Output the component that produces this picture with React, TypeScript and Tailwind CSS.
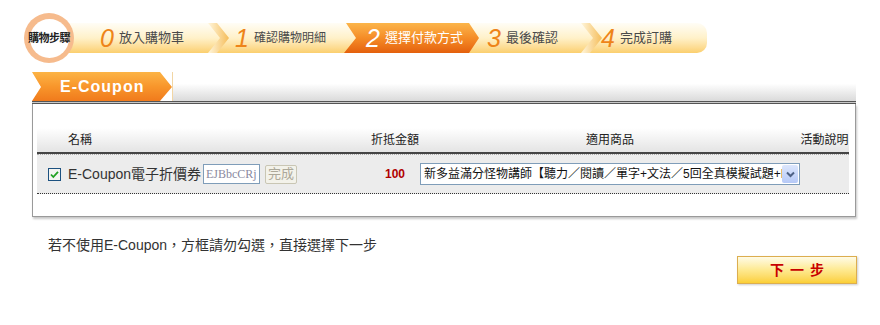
const FONT = "font-['Liberation_Sans','Noto_Sans_CJK_TC',sans-serif]"

function Chevron() {
  return (
    <svg width="24" height="30" viewBox="0 0 24 30" className="shrink-0">
      <defs>
        <linearGradient id="chev" x1="0" y1="0" x2="1" y2="0">
          <stop offset="0" stopColor="#fff6dc" />
          <stop offset="1" stopColor="#f5bd5a" />
        </linearGradient>
      </defs>
      <polygon points="2,0 11,0 23,15 11,30 2,30 14,15" fill="url(#chev)" />
    </svg>
  )
}

function StepNum({ n, active }: { n: string; active?: boolean }) {
  return (
    <span
      className={`font-['Liberation_Sans',sans-serif] italic text-[25px] leading-none mr-[5px] ${
        active ? 'text-white' : 'text-[#ee8419]'
      }`}
    >
      {n}
    </span>
  )
}

function StepBar() {
  return (
    <div className="flex items-center h-[50px] ml-[24px]">
      <div className="relative z-10 flex h-[50px] w-[50px] shrink-0 items-center justify-center rounded-full bg-[#f6bb8d]">
        <div className="flex h-[39px] w-[39px] items-center justify-center rounded-full bg-white">
          <span className="whitespace-nowrap text-[11px] font-bold tracking-[-0.5px] text-[#222]">購物步驟</span>
        </div>
      </div>
      <div className="-ml-[14px] flex h-[30px] w-[647px] items-center rounded-r-[10px] bg-linear-to-b from-[#fffdf6] via-[#fff1c9] to-[#fbcf6e] text-[13px] text-[#4a4a4a]">
        <div className="flex w-[146px] items-center pl-[40px]">
          <StepNum n="0" />
          <span>放入購物車</span>
        </div>
        <Chevron />
        <div className="flex w-[117px] items-center pl-[5px]">
          <StepNum n="1" />
          <span className="text-[12px]">確認購物明細</span>
        </div>
        <div className="-ml-[3px] flex h-[30px] w-[135px] shrink-0 items-center bg-linear-to-b from-[#fbb54a] via-[#f58c26] to-[#e4600c] pl-[22px] text-[13px] text-white [clip-path:polygon(2px_0,125px_0,135px_15px,125px_30px,0_30px,12px_15px)]">
          <StepNum n="2" active />
          <span>選擇付款方式</span>
        </div>
        <div className="flex w-[100px] items-center pl-[8px]">
          <StepNum n="3" />
          <span>最後確認</span>
        </div>
        <Chevron />
        <div className="-ml-[2px] flex items-center">
          <StepNum n="4" />
          <span>完成訂購</span>
        </div>
      </div>
    </div>
  )
}

function Checkbox() {
  return (
    <svg width="13" height="13" viewBox="0 0 13 13" className="shrink-0">
      <rect x="0.5" y="0.5" width="12" height="12" fill="#f4f4f0" stroke="#1c5180" />
      <path d="M3 6.5 L5.3 9 L10 3.8" fill="none" stroke="#21a121" strokeWidth="1.8" />
    </svg>
  )
}

function CouponBox() {
  return (
    <div className="ml-[32px] mt-[9px] w-[824px]">
      <div className="flex h-[29px]">
        <div className="flex w-[140px] shrink-0 items-center bg-linear-to-b from-[#fcb446] via-[#f8962b] to-[#f07a1c] pl-[28px] [clip-path:polygon(0_0,128px_0,140px_15px,128px_29px,0_29px,9px_15px)]">
          <span className={`${FONT} text-[16px] font-bold tracking-[1px] text-white`}>E-Coupon</span>
        </div>
        <div className="w-px bg-[#f2d6a4]" />
        <div className="flex-1 bg-linear-to-b from-white from-40% to-[#dadada]" />
      </div>
      <div className="h-[3px] border-y border-[#555] bg-[#c8c8c8]" />
      <div className="border-x border-b border-[#9a9a9a] pt-[24px] shadow-[1px_2px_2px_rgba(0,0,0,0.22)]">
        <div className="ml-[4px] mr-[6px]">
          <div className="grid h-[26px] grid-cols-[333px_50px_380px_49px] items-end border-b-2 border-[#444] bg-linear-to-b from-white to-[#e4e4e4] pb-[3px] text-[12px] text-[#222]">
            <div className="pl-[31px]">名稱</div>
            <div className="text-center whitespace-nowrap">折抵金額</div>
            <div className="text-center">適用商品</div>
            <div className="text-center whitespace-nowrap">活動說明</div>
          </div>
          <div className="grid h-[40px] grid-cols-[333px_50px_380px_49px] items-center border-y border-dotted border-t-[#aaa] border-b-[#333] bg-[#ececec] text-[12px] text-[#333]">
            <div className="flex items-center pl-[11px]">
              <Checkbox />
              <span className="ml-[7px] w-[135px] shrink-0 whitespace-nowrap text-[14px]">E-Coupon電子折價券</span>
              <div className="flex h-[20px] w-[57px] shrink-0 items-center border border-[#7f9db9] bg-white pl-[2px] font-['Liberation_Serif',serif] text-[12px] text-[#8a8aa0]">
                EJBbcCRj
              </div>
              <div className="ml-[5px] flex h-[19px] w-[32px] items-center justify-center rounded-[2px] border border-[#c9c6b4] bg-[#f3f2ea] text-[13px] text-[#aca899]">
                完成
              </div>
            </div>
            <div className="text-center text-[12px] font-bold text-[#b00000]">100</div>
            <div className="flex h-[22px] items-center border border-[#7f9db9] bg-white">
              <div className="flex-1 overflow-hidden whitespace-nowrap pl-[3px] text-[12px] text-[#111]">
                新多益滿分怪物講師【聽力／閱讀／單字+文法／5回全真模擬試題+MP3】
              </div>
              <div className="mr-px flex h-[18px] w-[16px] shrink-0 items-center justify-center rounded-[2px] bg-linear-to-b from-[#dce6fc] to-[#b6c9f7]">
                <svg width="9" height="7" viewBox="0 0 9 7">
                  <path d="M1 1.5 L4.5 5 L8 1.5" fill="none" stroke="#4d6185" strokeWidth="2" />
                </svg>
              </div>
            </div>
            <div />
          </div>
        </div>
        <div className="h-[22px]" />
      </div>
    </div>
  )
}

export default function App() {
  return (
    <div className={`${FONT} relative h-[325px] w-[880px] overflow-hidden bg-white pt-[13px]`}>
      <StepBar />
      <CouponBox />
      <div className="ml-[48px] mt-[18px] h-[20px] whitespace-nowrap text-[14px] leading-[20px] text-[#333]">
        若不使用E-Coupon，方框請勿勾選，直接選擇下一步
      </div>
      <div className="mr-[23px] mt-[1px] flex justify-end">
        <button className="flex h-[28px] w-[120px] items-center justify-center border border-[#dcae4f] bg-linear-to-b from-[#fffbe6] via-[#fee98f] to-[#fbcf33] text-[14px] font-bold tracking-[6px] text-[#c80000] shadow-[1px_1px_2px_rgba(0,0,0,0.2)]">
          <span className="pl-[6px]">下一步</span>
        </button>
      </div>
    </div>
  )
}
